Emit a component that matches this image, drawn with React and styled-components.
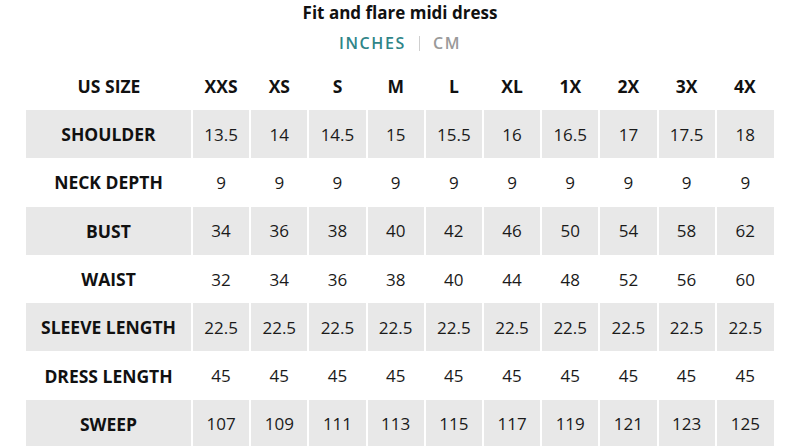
import React, { useState } from "react";
import styled, { createGlobalStyle } from "styled-components";

const GlobalStyle = createGlobalStyle`
  body {
    margin: 0;
    background: #fff;
    font-family: "Open Sans", "Noto Sans", sans-serif;
    color: #111;
  }
`;

const sizes = ["XXS", "XS", "S", "M", "L", "XL", "1X", "2X", "3X", "4X"];

const rows = [
  { label: "SHOULDER", values: ["13.5", "14", "14.5", "15", "15.5", "16", "16.5", "17", "17.5", "18"] },
  { label: "NECK DEPTH", values: ["9", "9", "9", "9", "9", "9", "9", "9", "9", "9"] },
  { label: "BUST", values: ["34", "36", "38", "40", "42", "46", "50", "54", "58", "62"] },
  { label: "WAIST", values: ["32", "34", "36", "38", "40", "44", "48", "52", "56", "60"] },
  { label: "SLEEVE LENGTH", values: Array(10).fill("22.5") },
  { label: "DRESS LENGTH", values: Array(10).fill("45") },
  { label: "SWEEP", values: ["107", "109", "111", "113", "115", "117", "119", "121", "123", "125"] },
];

export default function App() {
  const [unit, setUnit] = useState("in");

  return (
    <Page>
      <GlobalStyle />
      <Title>Fit and flare midi dress</Title>
      <Units>
        <UnitButton active={unit === "in"} onClick={() => setUnit("in")}>
          INCHES
        </UnitButton>
        <Divider />
        <UnitButton active={unit === "cm"} onClick={() => setUnit("cm")}>
          CM
        </UnitButton>
      </Units>
      <Table>
        <thead>
          <tr>
            <HeadCell>US SIZE</HeadCell>
            {sizes.map((s) => (
              <HeadCell key={s}>{s}</HeadCell>
            ))}
          </tr>
        </thead>
        <tbody>
          {rows.map((row, i) => (
            <Row key={row.label} shaded={i % 2 === 0}>
              <LabelCell>{row.label}</LabelCell>
              {row.values.map((v, j) => (
                <Cell key={j}>{v}</Cell>
              ))}
            </Row>
          ))}
        </tbody>
      </Table>
    </Page>
  );
}

const Page = styled.div`
  display: flex;
  flex-direction: column;
  align-items: center;
  padding-top: 2px;
`;

const Title = styled.h1`
  margin: 0;
  font-size: 17px;
  font-weight: 700;
  line-height: 22px;
  color: #111;
`;

const Units = styled.div`
  display: flex;
  align-items: center;
  gap: 13px;
  margin-top: 8px;
  height: 22px;
`;

const UnitButton = styled.span`
  font-size: 16px;
  font-weight: 600;
  letter-spacing: 1.6px;
  color: ${(p) => (p.active ? "#2f8588" : "#9a9a9a")};
  cursor: pointer;
`;

const Divider = styled.span`
  width: 1px;
  height: 15px;
  background: #cfcfcf;
`;

const Table = styled.table`
  margin-top: 8px;
  width: 748px;
  border-collapse: collapse;
  table-layout: fixed;
  th:first-child,
  td:first-child {
    width: 166px;
  }
`;

const HeadCell = styled.th`
  height: 48px;
  padding: 0;
  font-size: 17.5px;
  font-weight: 700;
  text-align: center;
  color: #111;
`;

const Row = styled.tr`
  background: ${(p) => (p.shaded ? "#e8e8e8" : "#fff")};
`;

const Cell = styled.td`
  height: 48.3px;
  padding: 0;
  font-size: 17px;
  text-align: center;
  color: #1a1a1a;
  border-left: 2px solid #fff;
`;

const LabelCell = styled(Cell)`
  font-size: 17.5px;
  font-weight: 700;
  color: #111;
  border-left: none;
`;
